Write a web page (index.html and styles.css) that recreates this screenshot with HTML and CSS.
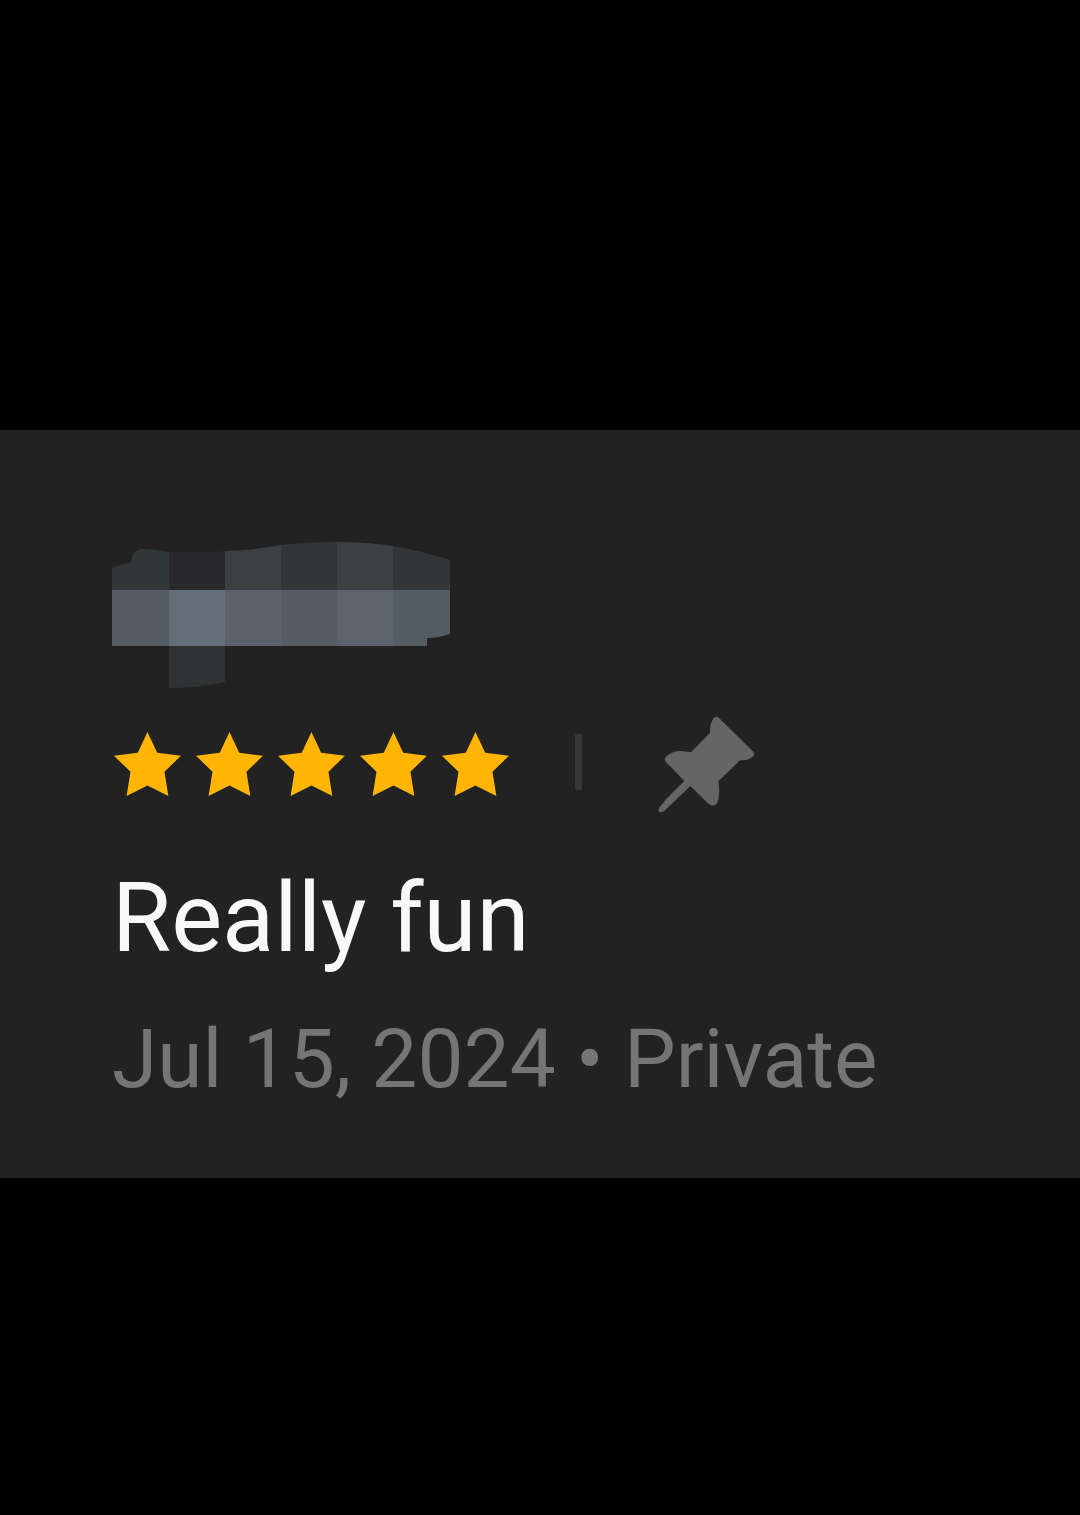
FILE: index.html
```html
<!DOCTYPE html>
<html lang="en">
<head>
<meta charset="utf-8">
<meta name="viewport" content="width=device-width, initial-scale=1">
<title>Review</title>
<link rel="stylesheet" href="styles.css">
</head>
<body>
	<svg class="symbols" width="0" height="0">
		<symbol id="star" viewBox="-2 0 71 68">
			<path d="M34.5 0 L44.5 21.5 L69 24.5 L52 41 L56 66 L34.5 55 L13 66 L17 41 L0 24.5 L24.5 21.5 Z"/>
		</symbol>
	</svg>
	<div class="review">
		<!-- hidden user name -->
		<svg class="name" viewBox="0 0 338 146">
			<path fill="#313639" d="M0 26 Q8 22 19 21 Q20 8 30 7 Q42 7 57 10 V48 H0 Z"/>
			<path fill="#29292b" d="M57 10 Q85 11 113 9 V48 H57 Z"/>
			<path fill="#3d4042" d="M113 9 Q135 9 169 3 V48 H113 Z"/>
			<path fill="#323639" d="M169 3 Q195 0 225 0 V48 H169 Z"/>
			<path fill="#3d4042" d="M225 0 Q255 0 281 4 V48 H225 Z"/>
			<path fill="#323638" d="M281 4 Q310 9 338 18 V48 H281 Z"/>
			<path fill="#555c64" d="M0 48 H57 V104 H0 Z"/>
			<path fill="#646e78" d="M57 48 H113 V104 H57 Z"/>
			<path fill="#5c626c" d="M113 48 H169 V104 H113 Z"/>
			<path fill="#555c64" d="M169 48 H225 V104 H169 Z"/>
			<path fill="#5c636d" d="M225 48 H281 V104 H225 Z"/>
			<path fill="#555d64" d="M281 48 H338 V92 Q326 96 315 96 V104 H281 Z"/>
			<path fill="#2f3334" d="M57 104 H113 V140 Q85 146 57 146 Z"/>
		</svg>
		<div class="rating">
			<div class="stars" role="img" aria-label="5 stars">
				<svg class="star"><use href="#star"/></svg>
				<svg class="star"><use href="#star"/></svg>
				<svg class="star"><use href="#star"/></svg>
				<svg class="star"><use href="#star"/></svg>
				<svg class="star"><use href="#star"/></svg>
			</div>
			<span class="line"></span>
			<svg class="pin" viewBox="54 48 291 291">
				<path d="M222 54 Q229 47 237 54 L340 155 Q347 164 338 170 Q325 182 300 181 L235 244 Q241 278 234 302 Q228 320 214 316 Q206 312 197 303 L151 258 L72 334 Q62 340 56 334 Q54 329 60 320 L81 295 L133 243 L78 186 Q70 176 80 169 Q100 151 125 153 L153 157 L210 98 Q210 66 222 54 Z"/>
			</svg>
		</div>
		<p class="text">Really fun</p>
		<p class="info">Jul 15, 2024 • Private</p>
	</div>
</body>
</html>
```
FILE: styles.css
```css
body{
	margin: 0;
	padding: 430px 0 0;
	background: #000;
	font-family: Roboto, "Liberation Sans", sans-serif;
}
.symbols{
	position: absolute;
}
.review{
	padding: 112px 112px 71px;
	background: #222;
}
.name{
	display: block;
	width: 338px;
	height: 146px;
}
.rating{
	display: flex;
	align-items: center;
	margin-top: 28px;
}
.stars{
	display: flex;
	gap: 13px;
}
.star{
	width: 69px;
	height: 66px;
	fill: #ffb501;
}
.line{
	width: 7px;
	height: 56px;
	margin: 0 76px 6px 66px;
	border-radius: 1px;
	background: #373737;
}
.pin{
	width: 97px;
	height: 97px;
	fill: #656565;
}
.text{
	margin: 49px 0 0;
	font-size: 96px;
	line-height: 112px;
	color: #f8f8f8;
}
.info{
	margin: 37px 0 0;
	font-size: 82px;
	line-height: 96px;
	color: #757575;
}
```
